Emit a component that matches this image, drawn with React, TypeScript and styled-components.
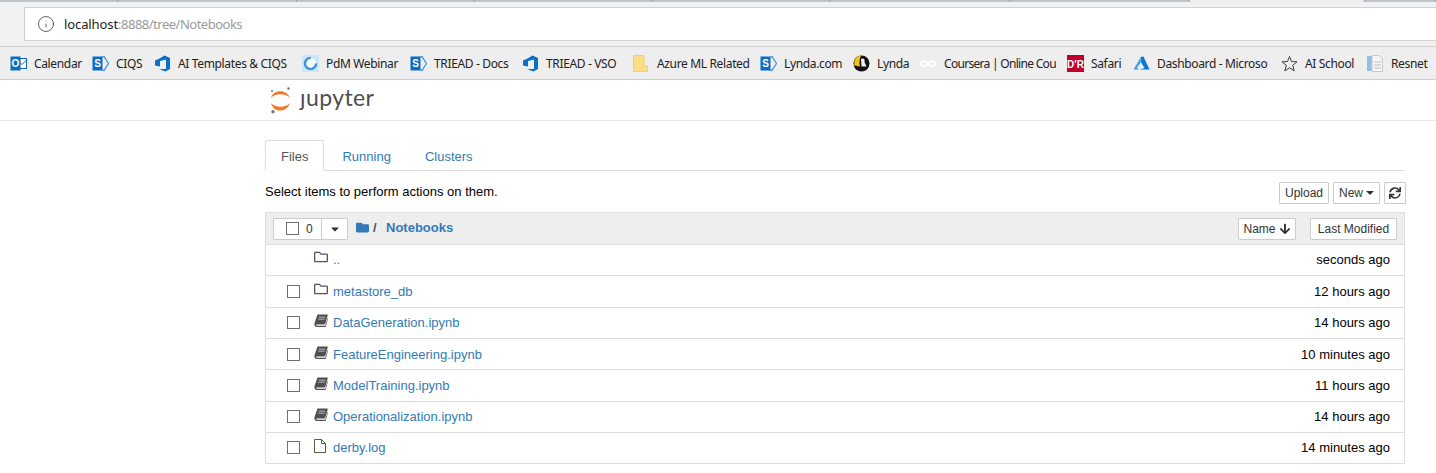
import React from 'react';
import styled, { createGlobalStyle } from 'styled-components';
import { FaRegFolder, FaFolder, FaArrowDown, FaSync, FaCaretDown } from 'react-icons/fa';
import { FiInfo } from 'react-icons/fi';

const GlobalStyle = createGlobalStyle`
  html, body {
    margin: 0;
    padding: 0;
    background: #fff;
    overflow: hidden;
  }
  * {
    box-sizing: border-box;
  }
`;

const TABS = [118, 179, 178, 178, 177, 180, 180, 175, 71];

const BOOKMARKS = [
  { label: 'Calendar', icon: 'outlook', width: 82 },
  { label: 'CIQS', icon: 'sharepoint', width: 62 },
  { label: 'AI Templates & CIQS', icon: 'vso', width: 148 },
  { label: 'PdM Webinar', icon: 'swirl', width: 108 },
  { label: 'TRIEAD - Docs', icon: 'sharepoint', width: 112 },
  { label: 'TRIEAD - VSO', icon: 'vso', width: 111 },
  { label: 'Azure ML Related', icon: 'folder', width: 127 },
  { label: 'Lynda.com', icon: 'sharepoint', width: 93 },
  { label: 'Lynda', icon: 'lynda', width: 67 },
  { label: 'Coursera | Online Cou', icon: 'coursera', width: 147, tight: true },
  { label: 'Safari', icon: 'dr', width: 66 },
  { label: 'Dashboard - Microso', icon: 'azure', width: 148 },
  { label: 'AI School', icon: 'star', width: 86 },
  { label: 'Resnet', icon: 'doc', width: 60 },
];

const ITEMS = [
  { name: 'metastore_db', kind: 'folder', time: '12 hours ago' },
  { name: 'DataGeneration.ipynb', kind: 'book', time: '14 hours ago' },
  { name: 'FeatureEngineering.ipynb', kind: 'book', time: '10 minutes ago' },
  { name: 'ModelTraining.ipynb', kind: 'book', time: '11 hours ago' },
  { name: 'Operationalization.ipynb', kind: 'book', time: '14 hours ago' },
  { name: 'derby.log', kind: 'file', time: '14 minutes ago' },
];

const BookIcon = () => (
  <svg width="14" height="13" viewBox="0 0 14 13">
    <path
      d="M3.5 0.5 H13 C13.6 0.5 13.8 1 13.7 1.6 L11.3 9.6 C11 10.3 10.6 10.6 10 10.6 H2.8 C2 10.6 2 11.8 3 11.8 H11.2 L13.6 4 L14 4.6 L11.8 12.3 C11.6 12.8 11.3 13 10.8 13 H3 C1.2 13 0 11.5 0.4 9.6 Z"
      fill="#4f4f4f"
    />
    <path d="M4.8 3.2 H11.4 M4.2 5.2 H10.8" stroke="#cfcfcf" strokeWidth="0.8" />
  </svg>
);

const FileIcon = () => (
  <svg width="12" height="14" viewBox="0 0 12 14">
    <path d="M0.5 0.5 H7.5 L11.5 4.5 V13.5 H0.5 Z M7.5 0.5 V4.5 H11.5" fill="none" stroke="#4f5f4a" />
  </svg>
);

const Sharepoint = () => (
  <svg width="17" height="17" viewBox="0 0 17 17">
    <path d="M8 3 L12 1.5 L16.5 8.5 L12 15.5 L8 14 Z" fill="none" stroke="#2f8fd8" strokeWidth="1.2" />
    <rect x="0.5" y="1.5" width="10" height="14" fill="#0a6cc4" />
    <text x="5.5" y="12" textAnchor="middle" fontSize="10" fontWeight="700" fontFamily="Liberation Sans, sans-serif" fill="#fff">S</text>
  </svg>
);

const BookmarkIcon = ({ name }: { name: string }) => {
  switch (name) {
    case 'outlook':
      return (
        <svg width="17" height="17" viewBox="0 0 17 17">
          <rect x="7" y="3.5" width="9.5" height="10" fill="#fff" stroke="#0a6cc4" />
          <path d="M7 5 L12 9.5 L16.5 5" fill="none" stroke="#0a6cc4" />
          <rect x="0.5" y="1.5" width="10" height="14" fill="#0a6cc4" />
          <text x="5.5" y="12" textAnchor="middle" fontSize="10" fontWeight="700" fontFamily="Liberation Sans, sans-serif" fill="#fff">O</text>
        </svg>
      );
    case 'sharepoint':
      return <Sharepoint />;
    case 'vso':
      return (
        <svg width="17" height="17" viewBox="0 0 17 17">
          <path d="M16 3 V14 L11.5 16.5 L5 14 H12 V4.5 L6 6 V11.5 L1 10.5 V5.5 L5.5 3.5 L10.5 0.5 Z" fill="#0a72c6" />
        </svg>
      );
    case 'swirl':
      return (
        <svg width="17" height="17" viewBox="0 0 17 17">
          <rect width="17" height="17" fill="#cfe6f7" />
          <circle cx="8.5" cy="8.5" r="5.6" fill="#f4f9fd" stroke="#3d94da" strokeWidth="2.4" strokeDasharray="26 9" />
        </svg>
      );
    case 'folder':
      return (
        <svg width="15" height="17" viewBox="0 0 15 17">
          <path d="M0.5 0.5 H11 V11 H14.5 V16.5 H0.5 Z" fill="#fbde85" stroke="#f2d06c" />
        </svg>
      );
    case 'lynda':
      return (
        <svg width="17" height="17" viewBox="0 0 17 17">
          <circle cx="8.5" cy="8.5" r="8" fill="#111" />
          <path d="M1.5 5.5 C3 2 5.5 0.8 8 0.8 C6.5 4 6 8 7 11.5 L1.2 10.5 Z" fill="#f1c40f" />
          <path d="M8 4 C10 2.5 12.5 4 11.5 7 L13.5 11.5 L8.5 11.5 Z" fill="#eee" />
        </svg>
      );
    case 'coursera':
      return (
        <svg width="16" height="17" viewBox="0 0 16 17">
          <path d="M8 8.5 C6 5 1 5.2 1 8.5 C1 11.8 6 12 8 8.5 C10 5 15 5.2 15 8.5 C15 11.8 10 12 8 8.5 Z" fill="none" stroke="#fff" strokeWidth="1.6" />
        </svg>
      );
    case 'dr':
      return (
        <svg width="17" height="17" viewBox="0 0 17 17">
          <rect width="17" height="17" fill="#c2002f" />
          <text x="8.5" y="12.5" textAnchor="middle" fontSize="10" fontWeight="700" fontFamily="Liberation Sans, sans-serif" fill="#fff">D'R</text>
        </svg>
      );
    case 'azure':
      return (
        <svg width="17" height="17" viewBox="0 0 17 17">
          <path d="M7.5 2 L10.5 1.5 L16.5 14.5 H6.5 L11.5 13 L8.2 7.5 Z" fill="#0a78d4" />
          <path d="M7.5 2.5 L7.8 7.5 L4 12.5 L6 14.5 H0.5 Z" fill="#3aa0e8" />
        </svg>
      );
    case 'star':
      return (
        <svg width="17" height="17" viewBox="0 0 17 17">
          <path d="M8.5 1.5 L10.5 6.5 L16 6.8 L11.7 10.3 L13.2 15.8 L8.5 12.8 L3.8 15.8 L5.3 10.3 L1 6.8 L6.5 6.5 Z" fill="none" stroke="#3c3c3c" strokeWidth="1" />
        </svg>
      );
    default:
      return (
        <svg width="16" height="17" viewBox="0 0 16 17">
          <rect x="0" y="1" width="6" height="15" fill="#8dbfe8" />
          <path d="M5 0.5 H12 L15.5 4 V16.5 H5 Z" fill="#f6f6f6" stroke="#c8c8c8" />
          <path d="M7 7 H14 M7 10 H14 M7 13 H14" stroke="#c0c0c0" />
        </svg>
      );
  }
};

const JupyterMark = () => (
  <svg width="24" height="28" viewBox="0 0 24 28">
    <path d="M2 12 C4 3 18 3 21 12 C17 7 6 7 2 12 Z" fill="#f37726" />
    <path d="M2 17 C6 22 17 22 21 17 C18 27 4 27 2 17 Z" fill="#f37726" />
    <circle cx="19.5" cy="2.5" r="1.2" fill="#767677" />
    <circle cx="3" cy="5" r="1" fill="#767677" />
    <circle cx="4" cy="25.8" r="1.7" fill="#767677" />
  </svg>
);

const RowIcon = ({ kind }: { kind: string }) => {
  if (kind === 'folder') return <FaRegFolder size={14} color="#5c4f66" />;
  if (kind === 'file') return <FileIcon />;
  return <BookIcon />;
};

export default function App() {
  return (
    <>
      <GlobalStyle />
      <Chrome>
        <TabStrip>
          {TABS.map((w, i) => (
            <TabSlice key={i} $w={w} $active={i === 7} />
          ))}
        </TabStrip>
        <AddressRow>
          <AddressBar>
            <InfoGlyph>
              <FiInfo size={18} strokeWidth={1.2} />
            </InfoGlyph>
            <Host>localhost</Host>
            <UrlRest>:8888/tree/Notebooks</UrlRest>
          </AddressBar>
        </AddressRow>
        <BookmarkBar>
          {BOOKMARKS.map((b) => (
            <Bookmark key={b.label + b.width} $w={b.width}>
              <IconSlot>
                <BookmarkIcon name={b.icon} />
              </IconSlot>
              <BookmarkLabel $tight={b.tight}>{b.label}</BookmarkLabel>
            </Bookmark>
          ))}
        </BookmarkBar>
      </Chrome>

      <Header>
        <JupyterMark />
        <Wordmark>ȷupyter</Wordmark>
      </Header>

      <Main>
        <NavTabs>
          <NavTab $active>Files</NavTab>
          <NavTab>Running</NavTab>
          <NavTab>Clusters</NavTab>
        </NavTabs>

        <ToolRow>
          <Hint>Select items to perform actions on them.</Hint>
          <ToolButtons>
            <Button $w={50}>Upload</Button>
            <Button $w={47}>
              New <Caret />
            </Button>
            <Button $w={22}>
              <FaSync size={12} />
            </Button>
          </ToolButtons>
        </ToolRow>

        <List>
          <ListHead>
            <SelectGroup>
              <SelectMain>
                <Check type="checkbox" />
                <span>0</span>
              </SelectMain>
              <SelectCaret>
                <FaCaretDown size={12} />
              </SelectCaret>
            </SelectGroup>
            <Crumb>
              <FaFolder size={13} color="#337ab7" />
              <CrumbSlash>/</CrumbSlash>
              <CrumbLink>Notebooks</CrumbLink>
            </Crumb>
            <SortButtons>
              <Button $w={58}>
                Name <FaArrowDown size={12} />
              </Button>
              <Button $w={87}>Last Modified</Button>
            </SortButtons>
          </ListHead>

          <Row>
            <CheckSlot />
            <RowIconSlot>
              <RowIcon kind="folder" />
            </RowIconSlot>
            <RowLink>..</RowLink>
            <RowTime>seconds ago</RowTime>
          </Row>
          {ITEMS.map((item) => (
            <Row key={item.name}>
              <CheckSlot>
                <Check type="checkbox" />
              </CheckSlot>
              <RowIconSlot>
                <RowIcon kind={item.kind} />
              </RowIconSlot>
              <RowLink>{item.name}</RowLink>
              <RowTime>{item.time}</RowTime>
            </Row>
          ))}
        </List>
      </Main>
    </>
  );
}

const Chrome = styled.div`
  height: 80px;
  background: #f1f1f1;
  border-bottom: 1px solid #cfcfcf;
  font-family: 'Noto Sans', sans-serif;
`;

const TabStrip = styled.div`
  display: flex;
  height: 2px;
`;

const TabSlice = styled.div<{ $w: number; $active?: boolean }>`
  width: ${(p) => p.$w}px;
  background: ${(p) => (p.$active ? '#eeeeee' : '#bcc3ca')};
  border-right: 1px solid #9ea3a8;
`;

const AddressRow = styled.div`
  height: 45px;
  padding: 5px 0 5px 24px;
  border-bottom: 1px solid #d0d0d0;
`;

const AddressBar = styled.div`
  display: flex;
  align-items: center;
  height: 34px;
  padding-left: 12px;
  background: #fff;
  border: 1px solid #d2d2d2;
  border-right: 0;
  font-size: 13px;
`;

const InfoGlyph = styled.span`
  display: flex;
  width: 27px;
  color: #555;
`;

const Host = styled.span`
  color: #222;
  letter-spacing: -0.1px;
`;

const UrlRest = styled.span`
  color: #9a9a9a;
  letter-spacing: -0.5px;
`;

const BookmarkBar = styled.div`
  display: flex;
  align-items: center;
  height: 32px;
  padding-left: 10px;
  background: #eeeeee;
  overflow: hidden;
`;

const Bookmark = styled.div<{ $w: number }>`
  display: flex;
  flex: none;
  align-items: center;
  width: ${(p) => p.$w}px;
`;

const IconSlot = styled.span`
  display: flex;
  flex: none;
  width: 24px;
`;

const BookmarkLabel = styled.span<{ $tight?: boolean }>`
  font-size: 12px;
  letter-spacing: ${(p) => (p.$tight ? '-0.7px' : '-0.35px')};
  white-space: nowrap;
  color: #222;
`;

const Header = styled.div`
  display: flex;
  align-items: center;
  gap: 7px;
  height: 41px;
  padding-left: 269px;
  border-bottom: 1px solid #e7e7e7;
`;

const Wordmark = styled.span`
  font-family: Lato, 'Noto Sans', sans-serif;
  font-size: 23px;
  line-height: 28px;
  letter-spacing: 0.4px;
  color: #4e4e4e;
  margin-top: -6px;
`;

const Main = styled.div`
  width: 1141px;
  margin-left: 265px;
  padding-top: 19px;
  font-family: 'Liberation Sans', Arial, sans-serif;
  font-size: 13px;
  color: #000;
`;

const NavTabs = styled.div`
  display: flex;
  height: 31px;
  margin-right: 1px;
  border-bottom: 1px solid #ddd;
`;

const NavTab = styled.div<{ $active?: boolean }>`
  height: 31px;
  margin-right: 2px;
  padding: 7px 15px 0;
  line-height: 18px;
  color: ${(p) => (p.$active ? '#555' : '#337ab7')};
  background: ${(p) => (p.$active ? '#fff' : 'transparent')};
  border: 1px solid ${(p) => (p.$active ? '#ddd' : 'transparent')};
  border-bottom-color: ${(p) => (p.$active ? '#fff' : 'transparent')};
  border-radius: 2px 2px 0 0;
`;

const ToolRow = styled.div`
  display: flex;
  align-items: flex-start;
  justify-content: space-between;
  height: 41px;
  padding-top: 11px;
`;

const Hint = styled.span`
  line-height: 18px;
  margin-top: 1px;
`;

const ToolButtons = styled.div`
  display: flex;
  gap: 4px;
`;

const Button = styled.button<{ $w: number }>`
  display: inline-flex;
  align-items: center;
  justify-content: center;
  gap: 3px;
  height: 22px;
  width: ${(p) => p.$w}px;
  padding: 0;
  font-family: inherit;
  font-size: 12px;
  color: #333;
  background: #fff;
  border: 1px solid #ccc;
  border-radius: 1px;
`;

const Caret = styled.span`
  width: 0;
  height: 0;
  border-top: 4px solid #333;
  border-left: 4px solid transparent;
  border-right: 4px solid transparent;
`;

const List = styled.div`
  margin-right: 1px;
  border: 1px solid #ddd;
  border-top: 0;
`;

const ListHead = styled.div`
  display: flex;
  align-items: center;
  height: 33px;
  padding: 0 7px 0 7px;
  background: #eeeeee;
  border-top: 1px solid #ddd;
  border-bottom: 1px solid #ddd;
`;

const SelectGroup = styled.div`
  display: flex;
  height: 22px;
  background: #fff;
  border: 1px solid #ccc;
  border-radius: 1px;
  font-size: 12px;
  color: #333;
`;

const SelectMain = styled.div`
  display: flex;
  align-items: center;
  gap: 7px;
  width: 48px;
  padding-left: 12px;
  border-right: 1px solid #ccc;
`;

const SelectCaret = styled.div`
  display: flex;
  align-items: center;
  justify-content: center;
  width: 25px;
  color: #333;
`;

const Crumb = styled.div`
  display: flex;
  align-items: center;
  margin-left: 8px;
  margin-top: -3px;
`;

const CrumbSlash = styled.span`
  margin-left: 4px;
  width: 13px;
  color: #555;
  font-weight: 700;
`;

const CrumbLink = styled.span`
  font-weight: 700;
  color: #337ab7;
`;

const SortButtons = styled.div`
  display: flex;
  gap: 14px;
  margin-left: auto;
`;

const Row = styled.div`
  display: flex;
  align-items: center;
  height: 31.33px;
  border-bottom: 1px solid #ddd;
  ${ListHead} + & {
    padding-bottom: 2px;
  }
  &:last-child {
    border-bottom: 0;
    height: 30px;
  }
`;

const CheckSlot = styled.div`
  display: flex;
  align-items: center;
  width: 48px;
  padding-left: 21px;
`;

const Check = styled.input`
  appearance: none;
  width: 13px;
  height: 13px;
  margin: 0;
  background: #fff;
  border: 1px solid #707070;
`;

const RowIconSlot = styled.span`
  display: flex;
  width: 19px;
  margin-top: -4px;
`;

const RowLink = styled.span`
  color: #337ab7;
`;

const RowTime = styled.span`
  margin-left: auto;
  padding-right: 14px;
`;
